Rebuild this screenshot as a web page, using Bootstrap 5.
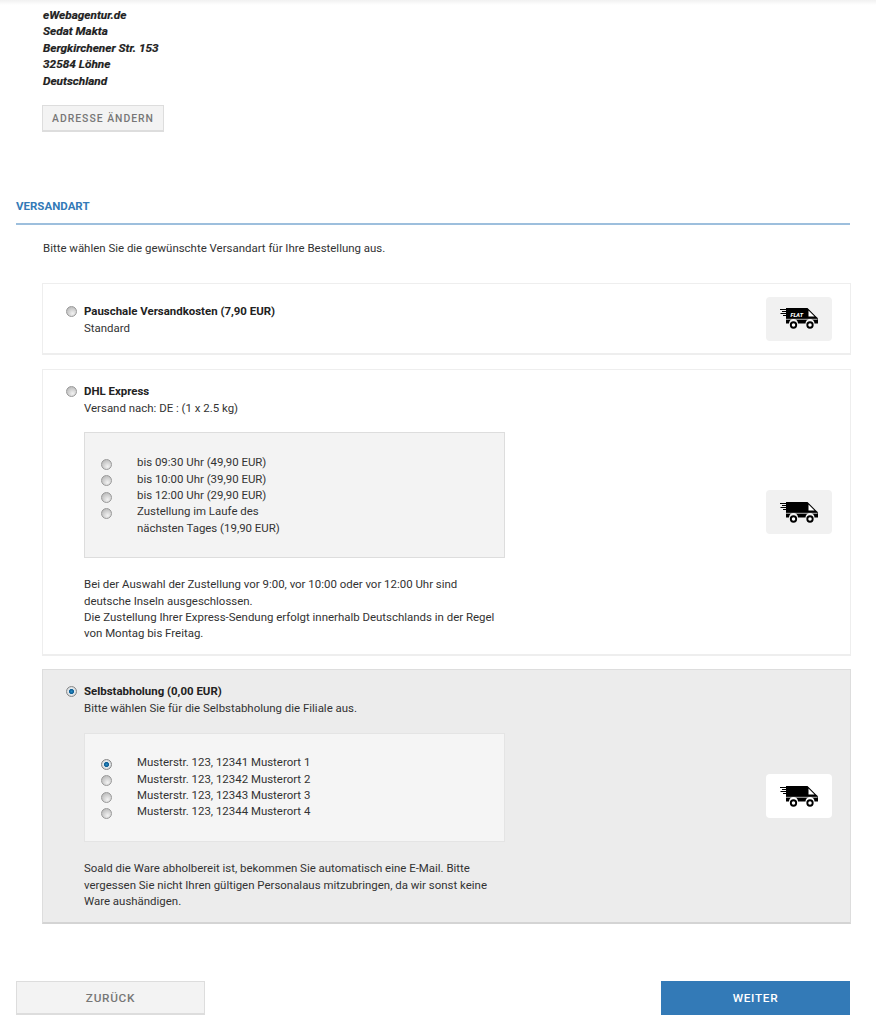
<!DOCTYPE html>
<html lang="de">
<head>
<meta charset="utf-8">
<title>Versandart</title>
<link rel="stylesheet" href="https://cdn.jsdelivr.net/npm/bootstrap@5.3.0/dist/css/bootstrap.min.css">
<style>
html,body{height:1024px;overflow:hidden}
body{font-family:Roboto,"Liberation Sans",sans-serif;font-size:11.45px;line-height:16.45px;color:#333;background:#fff}
.topfade{height:5px;background:linear-gradient(#f1f1f1,#fff)}
.page{padding:1.800px 26px 0 16px}
.addr{margin:0 0 0 27px;font-size:11.8px;font-weight:700;font-style:italic;color:#222;-webkit-text-stroke:.2px #222}
.btn-change{margin:15.700px 0 0 26px;height:27px;width:122px;padding:0;border:1px solid #ddd;border-bottom-width:2px;border-radius:0;background:#f3f3f3;color:#777;font-size:10.400px;font-weight:500;letter-spacing:1px;line-height:25px;display:block}
.sec-title{margin:66px 0 0;font-size:11.500px;font-weight:700;line-height:16px;color:#337ab7}
.sec-rule{margin:9px 0 0;height:2px;background:#9dbfdd}
.intro{margin:15px 0 0 27px}
.opt{margin:0 -1px 14px 26px;background:#fff;border:1px solid #eee;border-bottom-width:2px;padding:0 18px 0 23px}
.opt-1{margin-top:27px;height:72px}
.opt-2{height:287px;margin-bottom:13px}
.opt-3{height:255px;background:#ececec;border-color:#ddd;border-bottom-color:#d4d4d4;margin-bottom:0}
.rad{appearance:none;-webkit-appearance:none;flex:none;display:block;width:11px;height:11px;margin:0;border-radius:50%;border:1px solid #999;background:radial-gradient(circle at 62% 72%,#f2f2f2,#b8b8b8 85%)}
.rad:checked{background:radial-gradient(circle,#2a8cc4 0,#0b5d94 34%,#e4eaee 46%,#c4c4c4 100%);border-color:#888}
.rad-main{margin:3px 7px 0 0}
.opt-left{align-self:flex-start;padding-top:13px}
.opt-1 .opt-left{padding-top:19px}
.opt-body{width:421px}
.opt-name{font-weight:700;color:#222}
.inner{margin-top:16px;background:#f3f3f3;border:1px solid #ddd;padding:21px 16px 0}
.inner-2{height:126px}
.inner-3{height:109px;margin-top:17px;padding-top:20px;background:#f5f5f5;border-color:#e4e4e4}
.inner-row{display:flex;align-items:flex-start}
.rad-sub{margin:4.500px 25px 0 0}
.note{margin:18px 0 0}
.iconbox{flex:none;width:66px;height:44px;border-radius:4px;background:#f1f1f1;display:flex;align-items:center;justify-content:center}
.opt-3 .iconbox{background:#fff}
.truck{display:block;width:38px;height:21px}
.foot{margin-top:56.500px}
.navbtn{width:189px;height:34px;padding:0;border-radius:0;font-size:11.800px;font-weight:500;letter-spacing:.7px;line-height:33px}
.btn-back{background:#f3f3f3;border:1px solid #ddd;border-bottom-width:2px;color:#777}
.btn-next{background:#337ab7;border:1px solid #337ab7;color:#fff}
.btn-back:hover{background:#f3f3f3;color:#777;border-color:#ddd}
.btn-next:hover{background:#337ab7;color:#fff;border-color:#337ab7}
</style>
</head>
<body>
<div class="topfade"></div>
<div class="page">
  <p class="addr">eWebagentur.de<br>Sedat Makta<br>Bergkirchener Str. 153<br>32584 Löhne<br>Deutschland</p>
  <button type="button" class="btn btn-change">ADRESSE ÄNDERN</button>

  <h2 class="sec-title">VERSANDART</h2>
  <div class="sec-rule"></div>
  <p class="intro mb-0">Bitte wählen Sie die gewünschte Versandart für Ihre Bestellung aus.</p>

  <div class="opt opt-1 d-flex justify-content-between align-items-center">
    <div class="d-flex opt-left">
      <input class="rad rad-main" type="radio" name="ship" aria-label="Pauschale Versandkosten">
      <div><div class="opt-name">Pauschale Versandkosten (7,90 EUR)</div><div>Standard</div></div>
    </div>
    <div class="iconbox">
      <svg class="truck" viewBox="0 0 38 21"><use href="#trk"/><text x="10.500" y="9" font-family="Roboto,sans-serif" font-size="5.500" font-weight="900" font-style="italic" fill="#fff">FLAT</text></svg>
    </div>
  </div>

  <div class="opt opt-2 d-flex justify-content-between align-items-center">
    <div class="d-flex opt-left">
      <input class="rad rad-main" type="radio" name="ship" aria-label="DHL Express">
      <div class="opt-body">
        <div class="opt-name">DHL Express</div><div>Versand nach: DE : (1 x 2.5 kg)</div>
        <div class="inner inner-2">
          <div class="inner-row"><input class="rad rad-sub" type="radio" name="dhl" aria-label="09:30"><span>bis 09:30 Uhr (49,90 EUR)</span></div>
          <div class="inner-row"><input class="rad rad-sub" type="radio" name="dhl" aria-label="10:00"><span>bis 10:00 Uhr (39,90 EUR)</span></div>
          <div class="inner-row"><input class="rad rad-sub" type="radio" name="dhl" aria-label="12:00"><span>bis 12:00 Uhr (29,90 EUR)</span></div>
          <div class="inner-row"><input class="rad rad-sub" type="radio" name="dhl" aria-label="Tag"><span>Zustellung im Laufe des<br>nächsten Tages (19,90 EUR)</span></div>
        </div>
        <p class="note mb-0">Bei der Auswahl der Zustellung vor 9:00, vor 10:00 oder vor 12:00 Uhr sind deutsche Inseln ausgeschlossen.<br>Die Zustellung Ihrer Express-Sendung erfolgt innerhalb Deutschlands in der Regel von Montag bis Freitag.</p>
      </div>
    </div>
    <div class="iconbox"><svg class="truck" viewBox="0 0 38 21"><use href="#trk"/></svg></div>
  </div>

  <div class="opt opt-3 d-flex justify-content-between align-items-center">
    <div class="d-flex opt-left">
      <input class="rad rad-main" type="radio" name="ship" checked aria-label="Selbstabholung">
      <div class="opt-body">
        <div class="opt-name">Selbstabholung (0,00 EUR)</div><div>Bitte wählen Sie für die Selbstabholung die Filiale aus.</div>
        <div class="inner inner-3">
          <div class="inner-row"><input class="rad rad-sub" type="radio" name="fil" checked aria-label="1"><span>Musterstr. 123, 12341 Musterort 1</span></div>
          <div class="inner-row"><input class="rad rad-sub" type="radio" name="fil" aria-label="2"><span>Musterstr. 123, 12342 Musterort 2</span></div>
          <div class="inner-row"><input class="rad rad-sub" type="radio" name="fil" aria-label="3"><span>Musterstr. 123, 12343 Musterort 3</span></div>
          <div class="inner-row"><input class="rad rad-sub" type="radio" name="fil" aria-label="4"><span>Musterstr. 123, 12344 Musterort 4</span></div>
        </div>
        <p class="note mb-0">Soald die Ware abholbereit ist, bekommen Sie automatisch eine E-Mail. Bitte vergessen Sie nicht Ihren gültigen Personalaus mitzubringen, da wir sonst keine Ware aushändigen.</p>
      </div>
    </div>
    <div class="iconbox"><svg class="truck" viewBox="0 0 38 21"><use href="#trk"/></svg></div>
  </div>

  <div class="foot d-flex justify-content-between">
    <button type="button" class="btn navbtn btn-back">ZURÜCK</button>
    <button type="button" class="btn navbtn btn-next">WEITER</button>
  </div>
</div>

<svg width="0" height="0" class="position-absolute" aria-hidden="true">
  <defs>
    <g id="trk">
      <path d="M6 0H27.500L36 8.500Q38 9.500 38 11V15.500H34.500A4.500 4.500 0 0 0 25.500 15.500H18A4.500 4.500 0 0 0 9 15.500H6z" fill="#000"/>
      <path d="M0 1.500H7M2 3.500H7M0.500 5.500H7M3 7.500H7" stroke="#000" stroke-width="1.100" fill="none"/>
      <path d="M28.500 2.500V8.500H34.500z" fill="#fff"/>
      <path d="M6 11.300H37.500" stroke="#fff" stroke-width=".7"/>
      <circle cx="13.500" cy="17" r="2.700" fill="#fff" stroke="#000" stroke-width="1.900"/>
      <circle cx="30" cy="17" r="2.700" fill="#fff" stroke="#000" stroke-width="1.900"/>
    </g>
  </defs>
</svg>
<script src="https://cdn.jsdelivr.net/npm/bootstrap@5.3.0/dist/js/bootstrap.bundle.min.js"></script>
</body>
</html>
